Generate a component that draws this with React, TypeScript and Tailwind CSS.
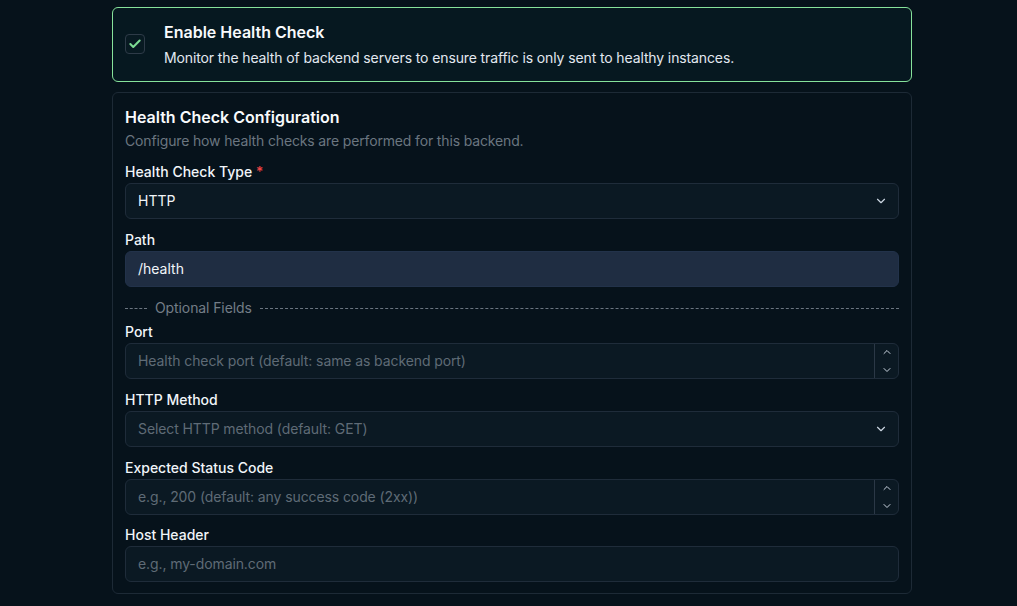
import React from 'react';
import { Check, ChevronDown, ChevronUp } from 'lucide-react';

function Label({ children, required }: { children: React.ReactNode; required?: boolean }) {
    return (
        <label className="block h-5 leading-5 text-sm font-medium text-[#f1f5f9]">
            {children}
            {required && <span className="text-[#ef4444]"> *</span>}
        </label>
    );
}

function SelectBox({ value, placeholder }: { value?: string; placeholder?: string }) {
    return (
        <div className="mt-px h-9 flex items-center justify-between rounded-md border border-[#1f2c3a] bg-[#0b1923] pl-3 pr-[10px]">
            <span className={value ? 'text-sm text-[#f1f5f9]' : 'text-sm tracking-[-0.1px] text-[#5f6b76]'}>{value || placeholder}</span>
            <ChevronDown size={14} className="text-[#cbd5e1]" />
        </div>
    );
}

function NumberBox({ placeholder }: { placeholder: string }) {
    return (
        <div className="mt-px h-9 flex items-stretch rounded-md border border-[#1f2c3a] bg-[#0b1923]">
            <span className="flex-1 flex items-center pl-3 text-sm tracking-[-0.1px] text-[#5f6b76]">{placeholder}</span>
            <div className="w-6 border-l border-[#2b3846] flex flex-col items-center justify-center gap-1.5 text-[#cbd5e1]">
                <ChevronUp size={12} />
                <ChevronDown size={12} />
            </div>
        </div>
    );
}

export default function App() {
    return (
        <div className="min-h-screen bg-[#06121b] font-['Inter',sans-serif] pt-[7px] pl-[112px]">
            <div className="w-[800px]">
                {/* Enable toggle card */}
                <div className="flex items-center gap-[19px] rounded-md border border-[#86e29b] bg-[#061820] px-3 pt-3 pb-[13px]">
                    <div className="w-5 h-5 rounded border border-[#2e3b48] bg-[#081a22] flex items-center justify-center">
                        <Check size={14} strokeWidth={3.5} className="text-[#7ddc94]" />
                    </div>
                    <div>
                        <div className="text-base leading-6 font-semibold text-[#f8fafc]">Enable Health Check</div>
                        <div className="text-sm leading-5 mt-1 tracking-[-0.12px] text-[#e2e8f0]">Monitor the health of backend servers to ensure traffic is only sent to healthy instances.</div>
                    </div>
                </div>

                {/* Configuration card */}
                <div className="mt-[10px] rounded-md border border-[#1d2a36] bg-[#06121b] px-3 pt-3 pb-[11px]">
                    <div className="text-base leading-6 font-semibold text-[#f8fafc]">Health Check Configuration</div>
                    <div className="mt-0.5 text-sm leading-5 tracking-[-0.15px] text-[#6b7680]">Configure how health checks are performed for this backend.</div>

                    <div className="mt-[11px]">
                        <Label required>Health Check Type</Label>
                        <SelectBox value="HTTP" />
                    </div>

                    <div className="mt-[11px]">
                        <Label>Path</Label>
                        <div className="mt-px h-9 flex items-center rounded-md border border-[#22324a] bg-[#1f2d42] px-3 text-sm text-[#f1f5f9]">/health</div>
                    </div>

                    <div className="mt-[11px] h-5 flex items-center gap-2 text-sm tracking-[-0.1px] text-[#737d87]">
                        <div className="w-[22px] border-t border-dashed border-[#6b7580]" />
                        <span>Optional Fields</span>
                        <div className="flex-1 border-t border-dashed border-[#6b7580]" />
                    </div>

                    <div className="mt-[4px]">
                        <Label>Port</Label>
                        <NumberBox placeholder="Health check port (default: same as backend port)" />
                    </div>

                    <div className="mt-[11px]">
                        <Label>HTTP Method</Label>
                        <SelectBox placeholder="Select HTTP method (default: GET)" />
                    </div>

                    <div className="mt-[11px]">
                        <Label>Expected Status Code</Label>
                        <NumberBox placeholder="e.g., 200 (default: any success code (2xx))" />
                    </div>

                    <div className="mt-[10px]">
                        <Label>Host Header</Label>
                        <div className="mt-px h-9 flex items-center rounded-md border border-[#1f2c3a] bg-[#0b1923] px-3 text-sm tracking-[-0.1px] text-[#5f6b76]">e.g., my-domain.com</div>
                    </div>
                </div>
            </div>
        </div>
    );
}
